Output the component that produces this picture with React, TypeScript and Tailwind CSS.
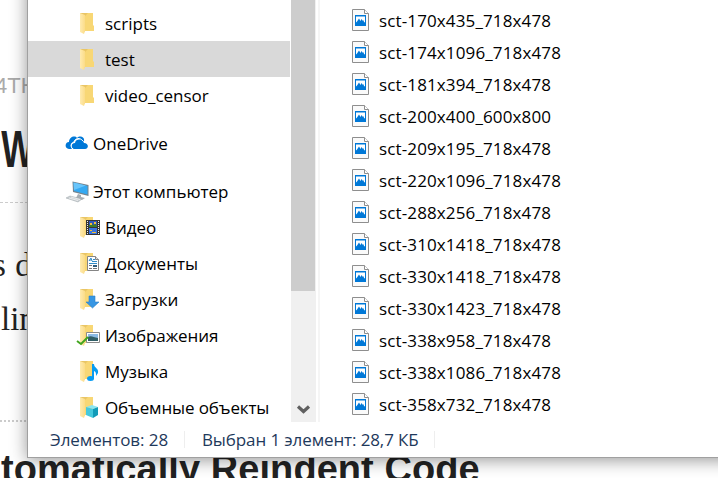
import type { ReactNode } from "react";

function Folder({ children }: { children?: ReactNode }) {
  return (
    <svg width="26" height="24" viewBox="0 0 26 24" className="shrink-0 overflow-visible">
      <defs>
        <linearGradient id="fold" x1="0" x2="1">
          <stop offset="0" stopColor="#ffebb0" />
          <stop offset="1" stopColor="#fbdc88" />
        </linearGradient>
      </defs>
      <path d="M3 2h13v12l1 1v5H6z" fill="#f8d775" />
      <path d="M3 2h8L8 5v15l-1 1-3-2z" fill="#e9c565" />
      <path d="M3 2l5 2v16l-1 3-4-2z" fill="url(#fold)" />
      {children}
    </svg>
  );
}

const film = (
  <g>
    <path d="M9 5h14v15H9z" fill="#353535" />
    <path d="M12 6h8v6h-8z" fill="#3157bd" />
    <path d="M12 13h8v6h-8z" fill="#3974df" />
    <path d="M12 10l3-1 1 1 3-1 1 3h-8z" fill="#3b7a28" />
    <path d="M13 8h2v2h-2zM17 7h2v2h-2zM13 15h2v1h-2zM15 17h4v1h-4z" fill="#f0bd36" />
    <path d="M10.5 6v14M21.5 6v14" stroke="#eee" strokeWidth="1" strokeDasharray="1 1" />
  </g>
);
const documentIcon = (
  <g>
    <path d="M10.5 5.5h8l3 3v11h-11z" fill="#fff" stroke="#858585" />
    <path d="M18.5 5.5v3h3" fill="#ddd" stroke="#858585" />
    <path d="M12 10l2-3 1 3M12.5 9h2M16 8.5h2M15 10.5h5M12 12.5h8" fill="none" stroke="#328dc9" />
    <path d="M12 14.5h3M12 17.5h3M16 17.5h4" stroke="#777" />
    <path d="M16 14h4v2h-4z" fill="#315c7c" />
  </g>
);
const download = <path d="M12 9h6v6h4l-6.5 6-6.5-6h3z" fill="#3796e3" stroke="#2b82cb" strokeWidth=".6" />;
const pictures = (
  <g>
    <path d="M9.5 9.5h13v10h-13z" fill="#fff" stroke="#8b8b8b" />
    <path d="M11 11h10v7H11z" fill="#8bbbe5" />
    <path d="M11 14c3-2 5 0 10 1v3H11z" fill="#315f67" />
    <path d="M0 18l4 3 7-7" fill="none" stroke="#42a51f" strokeWidth="2" />
  </g>
);
const music = (
  <g>
    <ellipse cx="13.5" cy="19.5" rx="3.5" ry="2.5" fill="#079cf2" />
    <path d="M15 5h2c0 4 5 4 4 9l-2 3c0-3 0-4-2-5v8h-2z" fill="#079cf2" />
  </g>
);
const cube = (
  <g>
    <path d="M9 12l6-2 6 2-5 2z" fill="#8be6f0" />
    <path d="M9 12l7 2v9l-7-3z" fill="#45c9dd" />
    <path d="M16 14l5-2v8l-5 3z" fill="#119bb9" />
  </g>
);

function Cloud() {
  return (
    <svg width="24" height="20" viewBox="0 0 24 20" className="shrink-0">
      <path d="M7 16H4c-5-1-4-7 0-7 0-5 6-7 8-4 3-3 8-1 7 3h-2c-3-4-8-2-8 1-4 1-4 4-2 7z" fill="#0078d7" />
      <path d="M9 16c-4-1-3-6 1-6 1-5 8-4 9 0 5 0 5 6 1 6z" fill="#0078d7" />
      <path d="M8 16c-3-2-2-6 1-7 1-4 6-5 9-1" fill="none" stroke="#fff" />
    </svg>
  );
}
function Computer() {
  return (
    <svg width="26" height="24" viewBox="0 0 26 24" className="shrink-0">
      <path d="M7.5 2.5L23.5 6v11L8 13z" fill="#75838d" />
      <path d="M8.5 3.5L22.5 7v8.5L9 12z" fill="#35a9f2" />
      <path d="M8.5 3.5L21 6.5 9 11z" fill="#68c5fb" />
      <path d="M13 15l3 1v2l4 1-3 2-6-2z" fill="#a7aeb4" />
      <path d="M5 17l12 3-4 3-12-4z" fill="#c9ced1" stroke="#9da6ab" strokeWidth=".5" />
      <path d="M4 19l9 2.5M6 18l9 2.5" stroke="#fff" strokeWidth=".6" />
    </svg>
  );
}
function ImageFile() {
  return (
    <svg width="17" height="22" viewBox="0 0 17 22" className="shrink-0">
      <path d="M.5.5h12l4 4v17H.5z" fill="#fafafa" stroke="#8e8e8e" />
      <path d="M12.5.5v4h4" fill="#fff" stroke="#8e8e8e" />
      <path d="M3 6h11v11H3z" fill="#0078d7" />
      <path d="M4 7.5h9v6l-1-.5-.5-2-.5 1-1.5-2-1 2L7 9.5l-2 3-1 1z" fill="#fff" />
    </svg>
  );
}

const folders = [
  { name: "scripts", style: "" },
  { name: "test", style: "bg-[#d9d9d9]" },
  { name: "video_censor", style: "" },
];
const places = [
  { name: "Видео", icon: film },
  { name: "Документы", icon: documentIcon },
  { name: "Загрузки", icon: download },
  { name: "Изображения", icon: pictures, style: "tracking-[-0.1px]" },
  { name: "Музыка", icon: music },
  { name: "Объемные объекты", icon: cube, style: "tracking-[-0.12px]" },
];
const files = [
  "sct-170x435_718x478", "sct-174x1096_718x478", "sct-181x394_718x478", "sct-200x400_600x800",
  "sct-209x195_718x478", "sct-220x1096_718x478", "sct-288x256_718x478", "sct-310x1418_718x478",
  "sct-330x1418_718x478", "sct-330x1423_718x478", "sct-338x958_718x478", "sct-338x1086_718x478",
  "sct-358x732_718x478",
];

function FolderRow({ name, icon, style = "" }: { name: string; icon?: ReactNode; style?: string }) {
  return (
    <div className={`flex h-9 shrink-0 items-center pl-[49px] ${style}`}>
      <Folder>{icon}</Folder>
      <span className="ml-[2px] pt-[2px]">{name}</span>
    </div>
  );
}

function Page() {
  return (
    <div className="flex h-[478px] w-[718px] flex-col overflow-hidden whitespace-nowrap bg-white text-[#222]">
      <div className="mt-[73px] h-[26px] -ml-[5px] font-['Liberation_Sans'] text-[22px] leading-[26px] text-[#aaa]">4TH</div>
      <div className="mt-[22px] h-[56px] origin-left scale-x-[0.68] pl-[2px] font-['Liberation_Sans'] text-[52px] leading-[56px] font-bold">W</div>
      <div className="mt-[25px] border-t border-dashed border-[#ccc]" />
      <div className="mt-[35px] -ml-[7px] h-[54px] font-['Liberation_Serif'] text-[33px] leading-[54px]"><span className="tracking-[0.6px]">s d</span></div>
      <div className="h-[54px] pl-px font-['Liberation_Serif'] text-[33px] leading-[54px]">lin</div>
      <div className="mt-[74px] border-t-2 border-dotted border-[#ccc]" />
      <div className="mt-[24px] ml-px h-[46px] font-['Liberation_Sans'] text-[38px] leading-[46px] font-bold tracking-[0.06px]">tomatically Reindent Code</div>
    </div>
  );
}

export default function App() {
  return (
    <main className="relative h-[478px] w-[718px] overflow-hidden">
      <Page />
      <section className="absolute -top-5 left-[27px] flex h-[478px] w-[720px] flex-col border border-[#a0a0a0] bg-white pt-[19px] font-['Open_Sans','Noto_Sans',sans-serif] text-[17px] leading-6 text-black shadow-[0_2px_16px_rgba(0,0,0,0.42)]">
        <div className="flex h-[422px] shrink-0">
          <nav className="mr-px flex w-[262px] flex-col overflow-hidden whitespace-nowrap pt-[5px]">
            {folders.map((f) => <FolderRow key={f.name} {...f} />)}
            <div className="mt-3 flex h-9 shrink-0 items-center pl-[37px]"><Cloud /><span className="ml-[4px] pt-[2px]">OneDrive</span></div>
            <div className="mt-3 flex h-9 shrink-0 items-center pl-[37px]"><Computer /><span className="ml-[2px] pt-[2px]">Этот компьютер</span></div>
            {places.map((p) => <FolderRow key={p.name} {...p} />)}
          </nav>
          <div className="flex w-[25px] flex-col justify-between bg-[#f0f0f0]">
            <div className="h-[291px] w-6 bg-[#cdcdcd]" />
            <svg width="25" height="26" viewBox="0 0 25 26"><path d="M7 10.5l5.5 5L18 10.5" fill="none" stroke="#606060" strokeWidth="3.2" /></svg>
          </div>
          <div className="ml-[2px] w-[2px] bg-[#f5f5f5]" />
          <ul className="flex flex-col pt-1 pl-[32px]">
            {files.map((f) => (
              <li key={f} className="flex h-8 shrink-0 items-center gap-[10px]"><ImageFile /><span className="pt-[2px] tracking-[0.13px]">{f}</span></li>
            ))}
          </ul>
        </div>
        <footer className="flex h-[36px] items-center whitespace-nowrap text-[#1e395b]">
          <span className="w-[134px] pt-px pl-[22px] tracking-[-0.08px]">Элементов: 28</span>
          <span className="ml-[22px] h-[17px] w-px bg-[#eee]" />
          <span className="w-[232px] pt-px pl-[17px] tracking-[-0.11px]">Выбран 1 элемент: 28,7 КБ</span>
          <span className="ml-[17px] h-[17px] w-px bg-[#eee]" />
        </footer>
      </section>
    </main>
  );
}
